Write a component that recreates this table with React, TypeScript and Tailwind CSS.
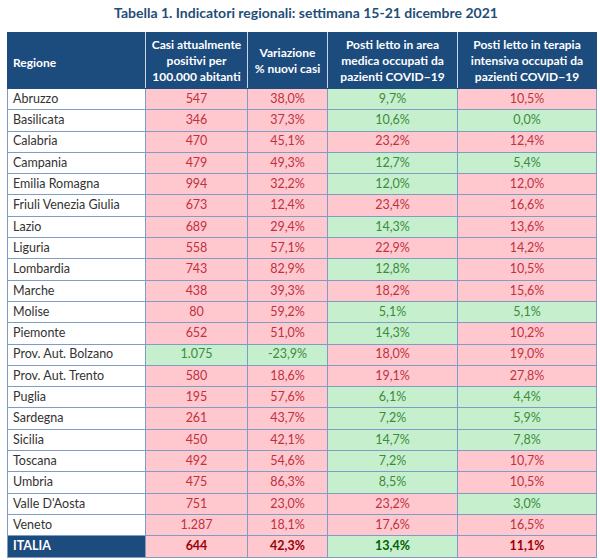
import React from "react";

type Tone = "r" | "g";

interface Row {
  regione: string;
  casi: [string, Tone];
  variazione: [string, Tone];
  area: [string, Tone];
  terapia: [string, Tone];
}

const rows: Row[] = [
  { regione: "Abruzzo", casi: ["547", "r"], variazione: ["38,0%", "r"], area: ["9,7%", "g"], terapia: ["10,5%", "r"] },
  { regione: "Basilicata", casi: ["346", "r"], variazione: ["37,3%", "r"], area: ["10,6%", "g"], terapia: ["0,0%", "g"] },
  { regione: "Calabria", casi: ["470", "r"], variazione: ["45,1%", "r"], area: ["23,2%", "r"], terapia: ["12,4%", "r"] },
  { regione: "Campania", casi: ["479", "r"], variazione: ["49,3%", "r"], area: ["12,7%", "g"], terapia: ["5,4%", "g"] },
  { regione: "Emilia Romagna", casi: ["994", "r"], variazione: ["32,2%", "r"], area: ["12,0%", "g"], terapia: ["12,0%", "r"] },
  { regione: "Friuli Venezia Giulia", casi: ["673", "r"], variazione: ["12,4%", "r"], area: ["23,4%", "r"], terapia: ["16,6%", "r"] },
  { regione: "Lazio", casi: ["689", "r"], variazione: ["29,4%", "r"], area: ["14,3%", "g"], terapia: ["13,6%", "r"] },
  { regione: "Liguria", casi: ["558", "r"], variazione: ["57,1%", "r"], area: ["22,9%", "r"], terapia: ["14,2%", "r"] },
  { regione: "Lombardia", casi: ["743", "r"], variazione: ["82,9%", "r"], area: ["12,8%", "g"], terapia: ["10,5%", "r"] },
  { regione: "Marche", casi: ["438", "r"], variazione: ["39,3%", "r"], area: ["18,2%", "r"], terapia: ["15,6%", "r"] },
  { regione: "Molise", casi: ["80", "r"], variazione: ["59,2%", "r"], area: ["5,1%", "g"], terapia: ["5,1%", "g"] },
  { regione: "Piemonte", casi: ["652", "r"], variazione: ["51,0%", "r"], area: ["14,3%", "g"], terapia: ["10,2%", "r"] },
  { regione: "Prov. Aut. Bolzano", casi: ["1.075", "g"], variazione: ["-23,9%", "g"], area: ["18,0%", "r"], terapia: ["19,0%", "r"] },
  { regione: "Prov. Aut. Trento", casi: ["580", "r"], variazione: ["18,6%", "r"], area: ["19,1%", "r"], terapia: ["27,8%", "r"] },
  { regione: "Puglia", casi: ["195", "r"], variazione: ["57,6%", "r"], area: ["6,1%", "g"], terapia: ["4,4%", "g"] },
  { regione: "Sardegna", casi: ["261", "r"], variazione: ["43,7%", "r"], area: ["7,2%", "g"], terapia: ["5,9%", "g"] },
  { regione: "Sicilia", casi: ["450", "r"], variazione: ["42,1%", "r"], area: ["14,7%", "g"], terapia: ["7,8%", "g"] },
  { regione: "Toscana", casi: ["492", "r"], variazione: ["54,6%", "r"], area: ["7,2%", "g"], terapia: ["10,7%", "r"] },
  { regione: "Umbria", casi: ["475", "r"], variazione: ["86,3%", "r"], area: ["8,5%", "g"], terapia: ["10,5%", "r"] },
  { regione: "Valle D'Aosta", casi: ["751", "r"], variazione: ["23,0%", "r"], area: ["23,2%", "r"], terapia: ["3,0%", "g"] },
  { regione: "Veneto", casi: ["1.287", "r"], variazione: ["18,1%", "r"], area: ["17,6%", "r"], terapia: ["16,5%", "r"] },
];

const ValueCell: React.FC<{ v: [string, Tone]; bold?: boolean }> = ({ v, bold }) => {
  const [text, tone] = v;
  const cls =
    tone === "r"
      ? bold
        ? "bg-[#ffc7ce] text-[#9c0006] font-bold"
        : "bg-[#ffc7ce] text-[#c0313f]"
      : bold
      ? "bg-[#c6efce] text-[#006100] font-bold"
      : "bg-[#c6efce] text-[#3b8b3b]";
  return (
    <td className={`border border-[#7f9cc6] text-center align-middle leading-none ${cls}`}>
      {text}
    </td>
  );
};

export default function App() {
  return (
    <div className="w-[600px] h-[560px] bg-white overflow-hidden font-['Lato','Liberation_Sans',sans-serif]">
      <h1 className="pt-[5px] h-[32px] text-center pl-[12px] text-[14px] font-bold text-[#1f4e79] leading-[16px]">
        Tabella 1. Indicatori regionali: settimana 15-21 dicembre 2021
      </h1>
      <table className="ml-[7px] w-[589px] border-collapse table-fixed text-[12.5px]">
        <colgroup>
          <col className="w-[138px]" />
          <col className="w-[102px]" />
          <col className="w-[80px]" />
          <col className="w-[130px]" />
          <col className="w-[139px]" />
        </colgroup>
        <thead>
          <tr className="h-[56px] bg-[#1c4b7e] text-white font-bold text-[12px] leading-[16px]">
            <th className="border border-[#1c4b7e] border-r-[#c9d4e4] text-left pl-[5px] pt-[4px]">Regione</th>
            <th className="border border-[#1c4b7e] border-r-[#c9d4e4] text-center">
              Casi attualmente
              <br />
              positivi per
              <br />
              100.000 abitanti
            </th>
            <th className="border border-[#1c4b7e] border-r-[#c9d4e4] text-center">
              Variazione
              <br />% nuovi casi
            </th>
            <th className="border border-[#1c4b7e] border-r-[#c9d4e4] text-center">
              Posti letto in area
              <br />
              medica occupati da
              <br />
              pazienti COVID−19
            </th>
            <th className="border border-[#1c4b7e] text-center">
              Posti letto in terapia
              <br />
              intensiva occupati da
              <br />
              pazienti COVID−19
            </th>
          </tr>
        </thead>
        <tbody>
          {rows.map((r) => (
            <tr key={r.regione} className="h-[21.3px]">
              <td className="border border-[#7f9cc6] pl-[5px] text-[#333333] leading-none">{r.regione}</td>
              <ValueCell v={r.casi} />
              <ValueCell v={r.variazione} />
              <ValueCell v={r.area} />
              <ValueCell v={r.terapia} />
            </tr>
          ))}
          <tr className="h-[21.3px]">
            <td className="border border-[#7f9cc6] bg-[#1c4b7e] pl-[5px] text-white font-bold leading-none">ITALIA</td>
            <ValueCell v={["644", "r"]} bold />
            <ValueCell v={["42,3%", "r"]} bold />
            <ValueCell v={["13,4%", "g"]} bold />
            <ValueCell v={["11,1%", "r"]} bold />
          </tr>
        </tbody>
      </table>
    </div>
  );
}
